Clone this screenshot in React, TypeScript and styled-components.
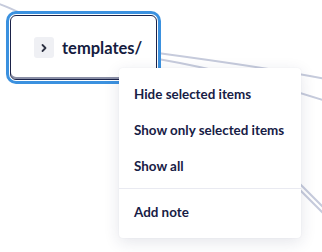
import styled, { createGlobalStyle } from "styled-components";

const GlobalStyle = createGlobalStyle`
  html, body {
    margin: 0;
    padding: 0;
    background: #ffffff;
  }
  body {
    font-family: Lato, "Noto Sans", sans-serif;
    color: #172045;
  }
`;

const Canvas = styled.div`
  position: relative;
  width: 322px;
  height: 252px;
  overflow: hidden;
  background: #ffffff;
`;

const Edges = styled.svg`
  position: absolute;
  inset: 0;
`;

const Node = styled.div`
  position: absolute;
  left: 10px;
  top: 15px;
  width: 147px;
  height: 65px;
  box-sizing: border-box;
  display: flex;
  align-items: center;
  gap: 8px;
  padding-left: 23px;
  background: #ffffff;
  border: 1px solid #1b2248;
  border-radius: 6px;
  box-shadow: inset 0 -2px 0 #8a8fa6, 0 0 0 1px #ffffff, 0 0 0 4px #3b91df;
`;

const Toggle = styled.span`
  display: flex;
  align-items: center;
  justify-content: center;
  width: 20px;
  height: 21px;
  border-radius: 3px;
  background: #eff0f4;
  color: #2d3142;
`;

const NodeLabel = styled.span`
  font-size: 16.5px;
  font-weight: 700;
  color: #151c3f;
  white-space: nowrap;
`;

const Menu = styled.ul`
  position: absolute;
  left: 119px;
  top: 68px;
  width: 182px;
  margin: 0;
  padding: 8px 0;
  list-style: none;
  box-sizing: border-box;
  background: #ffffff;
  border-radius: 4px;
  box-shadow: 0 4px 16px rgba(30, 40, 80, 0.12), 0 0 2px rgba(30, 40, 80, 0.06);
`;

const Item = styled.li<{ $divided?: boolean }>`
  height: 36px;
  display: flex;
  align-items: center;
  padding: 0 15px;
  font-size: 13.4px;
  font-weight: 700;
  color: #172045;
  white-space: nowrap;
  ${({ $divided }) =>
    $divided &&
    `
    margin-top: 4px;
    padding-top: 5px;
    border-top: 1px solid #e9eaf1;
  `}
`;

export default function App() {
  return (
    <Canvas>
      <GlobalStyle />
      <Edges width="322" height="252" viewBox="0 0 322 252">
        <g fill="none" stroke="#c6cbdc" strokeWidth="2">
          <path d="M -4 3 C 6 6, 12 9, 20 13" />
          <path d="M 158 53 C 210 60, 270 68, 326 79" />
          <path d="M 158 59 C 210 68, 260 80, 326 101" />
          <path d="M 290 174 C 300 184, 310 194, 326 210" />
          <path d="M 288 178 C 298 188, 308 198, 326 216" />
        </g>
      </Edges>
      <Node>
        <Toggle>
          <svg width="10" height="10" viewBox="0 0 10 10">
            <path d="M3.5 2 L6.5 5 L3.5 8" fill="none" stroke="currentColor" strokeWidth="1.8" strokeLinecap="round" strokeLinejoin="round" />
          </svg>
        </Toggle>
        <NodeLabel>templates/</NodeLabel>
      </Node>
      <Menu>
        <Item>Hide selected items</Item>
        <Item>Show only selected items</Item>
        <Item>Show all</Item>
        <Item $divided>Add note</Item>
      </Menu>
    </Canvas>
  );
}
